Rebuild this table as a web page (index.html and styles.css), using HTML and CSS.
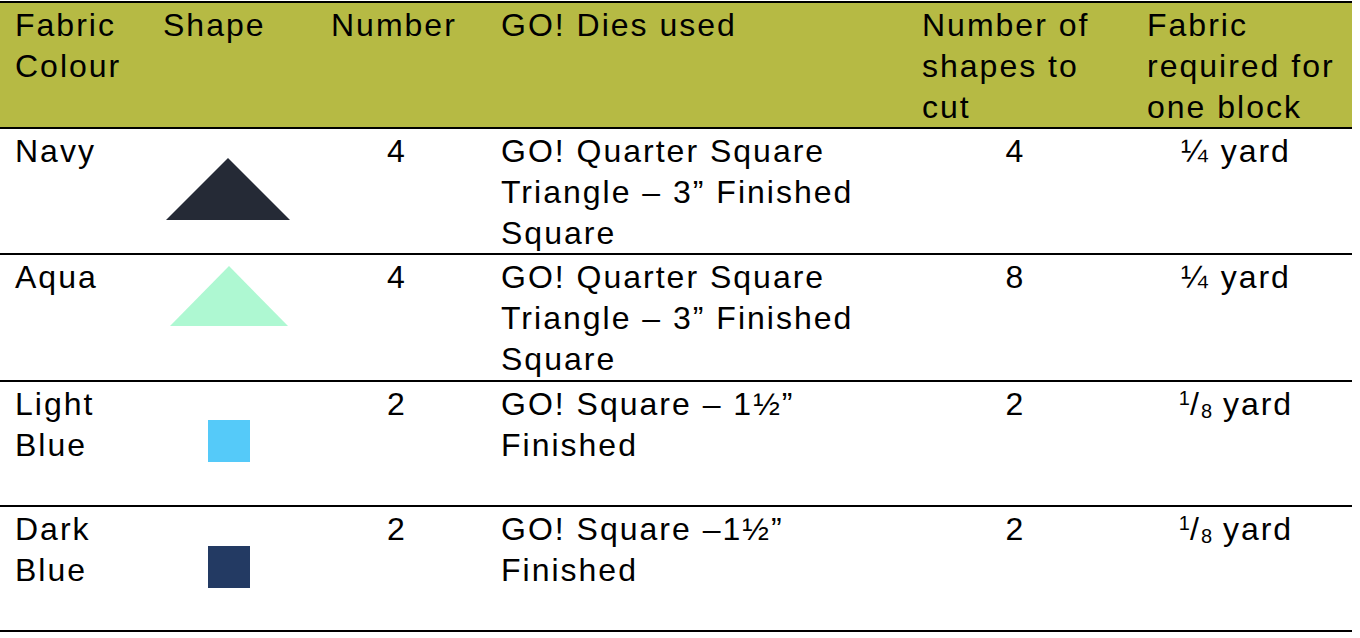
FILE: index.html
```html
<!DOCTYPE html>
<html lang="en">
<head>
<meta charset="utf-8">
<title>Fabric requirements</title>
<link rel="stylesheet" href="styles.css">
</head>
<body>
<div class="fabric-table" role="table">
  <div class="cell head" role="columnheader">Fabric<br>Colour</div>
  <div class="cell head" role="columnheader">Shape</div>
  <div class="cell head" role="columnheader">Number</div>
  <div class="cell head" role="columnheader">GO! Dies used</div>
  <div class="cell head" role="columnheader">Number of<br>shapes to<br>cut</div>
  <div class="cell head" role="columnheader">Fabric<br>required for<br>one block</div>

  <div class="cell">Navy</div>
  <div class="cell shape-cell"><svg class="shape tri-navy" width="124" height="62" viewBox="0 0 124 62"><polygon points="0,62 62,0 124,62" fill="#252a36"/></svg></div>
  <div class="cell num num-a">4</div>
  <div class="cell">GO! Quarter Square<br>Triangle – 3” Finished<br>Square</div>
  <div class="cell num num-b">4</div>
  <div class="cell num num-c">¼ yard</div>

  <div class="cell">Aqua</div>
  <div class="cell shape-cell"><svg class="shape tri-aqua" width="118" height="60" viewBox="0 0 118 60"><polygon points="0,60 59,0 118,60" fill="#aef8d2"/></svg></div>
  <div class="cell num num-a">4</div>
  <div class="cell">GO! Quarter Square<br>Triangle – 3” Finished<br>Square</div>
  <div class="cell num num-b">8</div>
  <div class="cell num num-c">¼ yard</div>

  <div class="cell">Light<br>Blue</div>
  <div class="cell shape-cell"><span class="shape sq sq-light"></span></div>
  <div class="cell num num-a">2</div>
  <div class="cell">GO! Square – 1½”<br>Finished</div>
  <div class="cell num num-b">2</div>
  <div class="cell num num-c"><span class="frac"><sup>1</sup>/<sub>8</sub></span> yard</div>

  <div class="cell">Dark<br>Blue</div>
  <div class="cell shape-cell"><span class="shape sq sq-dark"></span></div>
  <div class="cell num num-a">2</div>
  <div class="cell">GO! Square –1½”<br>Finished</div>
  <div class="cell num num-b">2</div>
  <div class="cell num num-c"><span class="frac"><sup>1</sup>/<sub>8</sub></span> yard</div>
</div>
</body>
</html>
```

FILE: styles.css
```css
html, body {
  margin: 0;
  padding: 0;
  background: #ffffff;
}

body {
  font-family: "Liberation Sans", Arial, sans-serif;
  font-size: 32px;
  line-height: 41px;
  letter-spacing: 2px;
  color: #000000;
}

.fabric-table {
  display: grid;
  grid-template-columns: 148px 168px 170px 421px 225px 220px;
  grid-template-rows: 126px 126px 127px 125px 125px;
  width: 1352px;
  margin-top: 1px;
  border-top: 2px solid #000000;
}

.cell {
  box-sizing: border-box;
  padding: 2px 15px 0;
  border-bottom: 2px solid #000000;
  white-space: nowrap;
}

.head {
  background: #b6ba44;
}

.num {
  text-align: center;
}

.num-a {
  padding-right: 23px;
}

.num-b {
  padding-right: 23px;
}

.num-c {
  padding-right: 27px;
}

.frac sup,
.frac sub {
  font-size: 20px;
  line-height: 0;
  letter-spacing: 0;
}

.frac sup {
  vertical-align: 10px;
}

.frac sub {
  vertical-align: -3px;
}

.shape-cell {
  padding: 0;
}

.shape {
  display: block;
}

.tri-navy {
  margin: 29px 0 0 18px;
}

.tri-aqua {
  margin: 11px 0 0 22px;
}

.sq {
  width: 42px;
  height: 42px;
  margin-left: 60px;
}

.sq-light {
  margin-top: 38px;
  background: #55caf9;
}

.sq-dark {
  margin-top: 39px;
  background: #233a63;
}
```
